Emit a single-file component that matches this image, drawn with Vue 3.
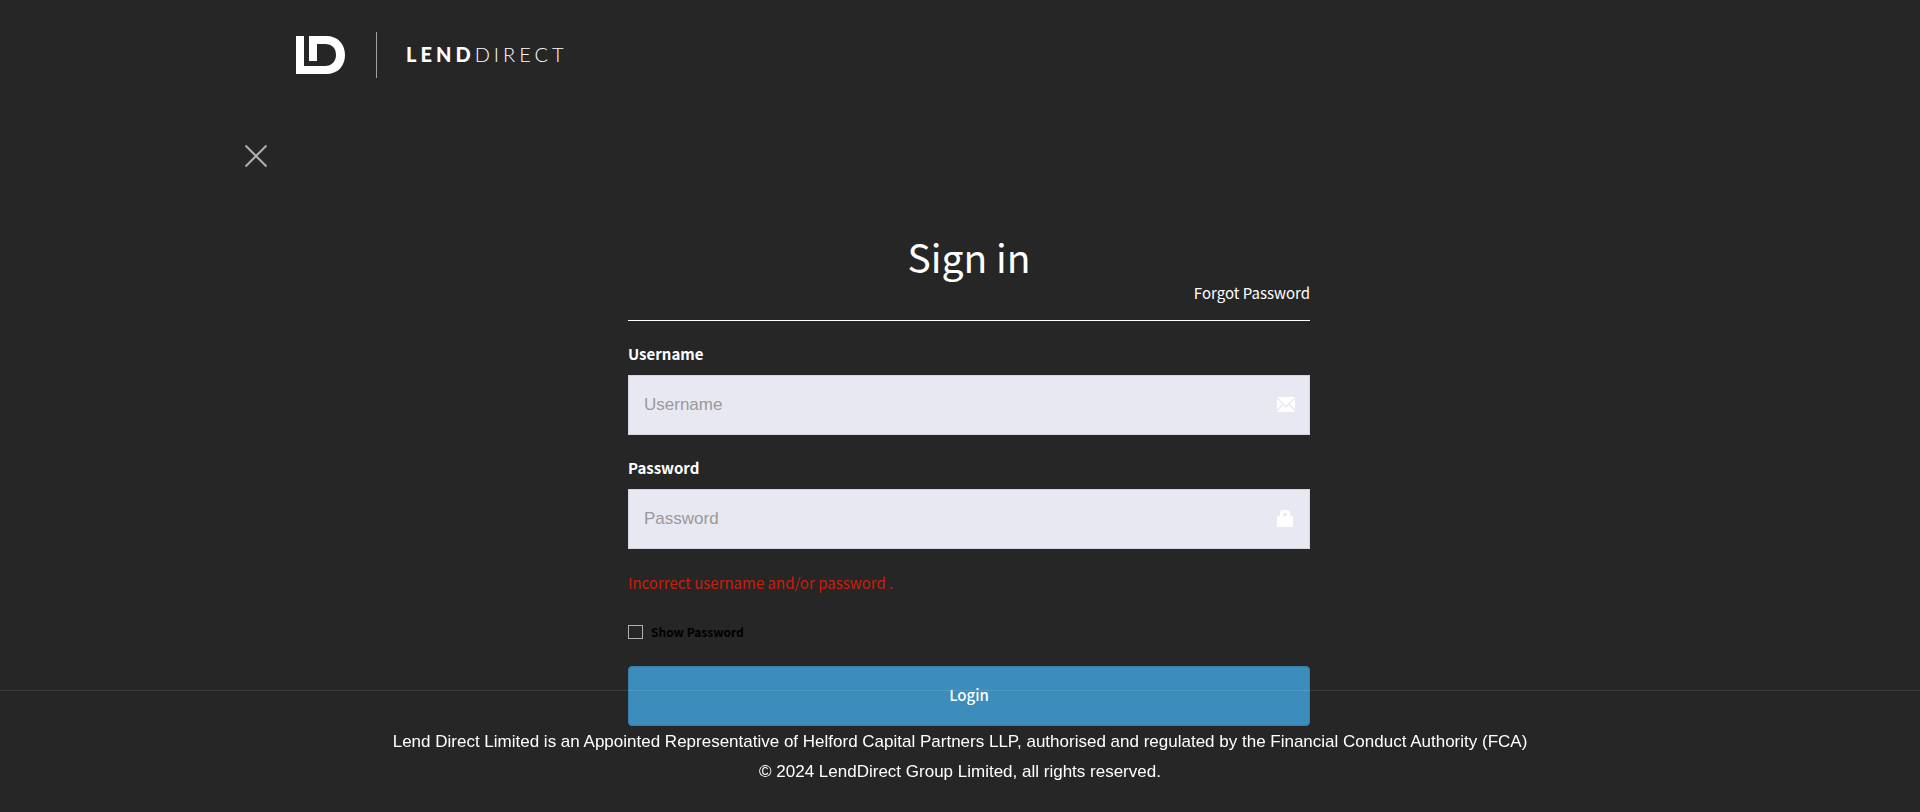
<script setup>
import { ref } from 'vue'

const username = ref('')
const password = ref('')
const showPassword = ref(false)
</script>

<template>
  <div class="page">
    <header class="header">
      <a class="brand" href="#" aria-label="LendDirect">
        <svg class="mark" width="49" height="38" viewBox="0 0 49 38" aria-hidden="true">
          <path fill="#fff" d="M0 0H8V30H29C36 30 40 25 40 19C40 12 36 8 29 8H21V25H13V0H30C42 0 49 8 49 19C49 30 42 38 30 38H0Z" />
        </svg>
        <span class="divider"></span>
        <span class="name"><b>LEND</b><span>DIRECT</span></span>
      </a>
    </header>

    <main class="main">
      <button class="close" type="button" aria-label="Close">
        <svg width="24" height="24" viewBox="0 0 24 24" aria-hidden="true">
          <path d="M1.5 1.5L22.5 22.5M22.5 1.5L1.5 22.5" fill="none" stroke="#b0b0b0" stroke-width="2" />
        </svg>
      </button>

      <form class="form" @submit.prevent>
        <h1>Sign in</h1>
        <div class="forgot"><a href="#">Forgot Password</a></div>

        <label class="label" for="username">Username</label>
        <div class="field">
          <input id="username" v-model="username" type="text" placeholder="Username" />
          <svg width="18" height="15" viewBox="0 0 18 15" aria-hidden="true">
            <path fill="#fff" d="M0 0H18L9 8.8ZM0 1.8L5.4 7.1L0 12.6ZM18 1.8V12.6L12.6 7.1ZM6.5 8.2L9 10.7L11.5 8.2L18 14.4V15H0V14.4Z" />
          </svg>
        </div>

        <label class="label" for="password">Password</label>
        <div class="field">
          <input id="password" v-model="password" :type="showPassword ? 'text' : 'password'" placeholder="Password" />
          <svg width="18" height="17" viewBox="0 0 18 17" aria-hidden="true">
            <path fill="#fff" fill-rule="evenodd" d="M3 6V3Q3 0 6 0H10Q13 0 13 3V6H15Q16 6 16 7V16Q16 17 15 17H1Q0 17 0 16V7Q0 6 1 6ZM6 6H10V4Q10 3 9 3H7Q6 3 6 4Z" />
          </svg>
        </div>

        <p class="error">Incorrect username and/or password .</p>

        <label class="show">
          <input v-model="showPassword" type="checkbox" />
          <span>Show Password</span>
        </label>

        <button class="login" type="submit">Login</button>
      </form>
    </main>

    <footer class="footer">
      <p>Lend Direct Limited is an Appointed Representative of Helford Capital Partners LLP, authorised and regulated by the Financial Conduct Authority (FCA)</p>
      <p>© 2024 LendDirect Group Limited, all rights reserved.</p>
    </footer>
  </div>
</template>

<style>
html,
body {
  margin: 0;
  background: #262626;
}
</style>

<style scoped>
.page {
  min-height: 100vh;
  box-sizing: border-box;
  color: #fff;
  background: #262626;
  font-family: "Noto Sans CJK SC", "Noto Sans", sans-serif;
  font-size: 15px;
}
.header,
.main {
  max-width: 1440px;
  margin: 0 auto;
  box-sizing: border-box;
}
.header {
  padding: 32px 56px;
}
.brand {
  display: inline-flex;
  align-items: center;
  color: #fff;
  text-decoration: none;
}
.divider {
  width: 1px;
  height: 46px;
  margin: 0 29px 0 31px;
  background: #a0a0a0;
}
.name {
  padding-bottom: 2px;
  font-family: Lato, sans-serif;
  font-size: 20px;
  line-height: 24px;
  letter-spacing: 4px;
}
.name b {
  font-weight: 900;
}
.name span {
  font-weight: 300;
}
.main {
  padding: 34px 4px 0;
}
.close {
  display: block;
  width: 24px;
  height: 24px;
  padding: 0;
  border: 0;
  background: none;
  cursor: pointer;
}
.form {
  display: flex;
  flex-direction: column;
  max-width: 682px;
  margin: 0 auto;
  padding: 61px 0 0 18px;
}
h1 {
  margin: 0;
  font-size: 39px;
  line-height: 54px;
  font-weight: 400;
  text-align: center;
}
.forgot {
  height: 37px;
  border-bottom: 1px solid #fff;
  line-height: 20px;
  text-align: right;
}
.forgot a {
  color: #fff;
  font-weight: 400;
  text-decoration: none;
}
.label {
  margin: 23px 0 11px;
  line-height: 20px;
  font-weight: 700;
}
.field {
  display: grid;
  align-items: center;
}
.field > * {
  grid-area: 1 / 1;
}
.field svg {
  justify-self: end;
  margin: 0 15px 2px 0;
  pointer-events: none;
}
.field input {
  box-sizing: border-box;
  width: 100%;
  height: 60px;
  padding: 0 48px 0 15px;
  border: 1px solid #d2d6de;
  border-radius: 0;
  background: #e8e8f3;
  color: #333;
  font-family: "Liberation Sans", Arial, sans-serif;
  font-size: 17px;
}
.field input::placeholder {
  color: #999;
  opacity: 1;
}
.error {
  margin: 24px 0 30px;
  color: #c81e0a;
  font-weight: 400;
  line-height: 20px;
}
.show {
  display: flex;
  align-items: center;
  align-self: flex-start;
  gap: 8px;
  color: #000;
  font-size: 12px;
  font-weight: 700;
  line-height: 18px;
}
.show input {
  appearance: none;
  box-sizing: border-box;
  width: 15px;
  height: 14px;
  margin: 0;
  border: 1px solid #b0b0b0;
}
.show input:checked {
  background: #3c8dbc;
}
.login {
  height: 60px;
  margin-top: 25px;
  padding: 0 0 3px;
  border: 1px solid #367fa9;
  border-radius: 4px;
  background: #3c8dbc;
  color: #fff;
  font-family: inherit;
  font-size: 15px;
  font-weight: 500;
  cursor: pointer;
}
.footer {
  position: fixed;
  right: 0;
  bottom: 0;
  left: 0;
  padding: 36px 0 25px;
  border-top: 1px solid rgba(255, 255, 255, 0.1);
  font-family: "Liberation Sans", Arial, sans-serif;
  font-size: 17px;
  line-height: 30px;
  text-align: center;
  pointer-events: none;
}
.footer p {
  margin: 0;
}
</style>
